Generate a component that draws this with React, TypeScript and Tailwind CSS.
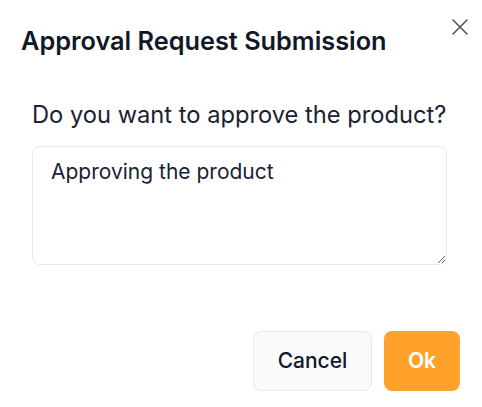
import { X } from "lucide-react";

export default function App() {
  return (
    <div
      className="relative w-[482px] h-[407px] bg-white text-[#1a2233]"
      style={{ fontFamily: "Inter, 'Noto Sans', sans-serif" }}
    >
      {/* Close */}
      <button className="absolute top-[13px] right-[8px] text-[#4b5563]">
        <X size={28} strokeWidth={1.35} />
      </button>

      {/* Header */}
      <div className="pl-[21px] pt-[26px]">
        <h2 className="text-[25.3px] leading-[30px] font-semibold text-[#111827]">
          Approval Request Submission
        </h2>
      </div>

      {/* Body */}
      <div className="pl-[32px] pr-[35px] pt-[45px]">
        <p className="text-[23.7px] leading-[28px] text-[#1a2233]">Do you want to approve the product?</p>
        <textarea
          defaultValue="Approving the product"
          className="mt-[17px] block w-[415px] h-[119px] rounded-[8px] border border-[#e5e9f0] pl-[18px] pr-[12px] pt-[12px] text-[21px] leading-[26px] text-[#1a2233] outline-none resize-y"
        />
      </div>

      {/* Footer */}
      <div className="flex justify-end gap-[12px] pr-[22px] pt-[66px]">
        <button className="h-[60px] w-[119px] rounded-[8px] border border-[#e5e9f0] bg-[#f8fafc] text-[21px] font-medium text-[#111827]">
          Cancel
        </button>
        <button className="h-[60px] w-[76px] rounded-[8px] bg-[#ffa22b] text-[21px] font-semibold text-white">
          Ok
        </button>
      </div>
    </div>
  );
}
